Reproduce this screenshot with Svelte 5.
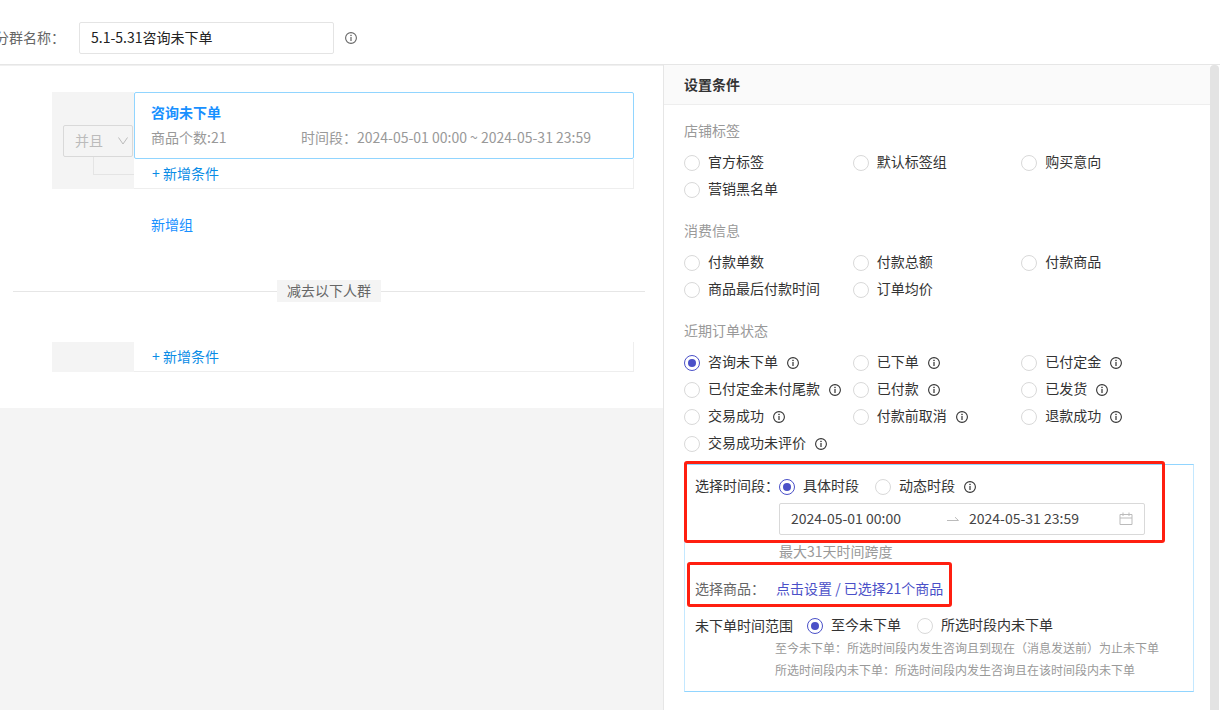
<script lang="ts">
    type Option = { label: string; info?: boolean };

    const sections: { title: string; options: Option[] }[] = [
        {
            title: '店铺标签',
            options: [{ label: '官方标签' }, { label: '默认标签组' }, { label: '购买意向' }, { label: '营销黑名单' }]
        },
        {
            title: '消费信息',
            options: [
                { label: '付款单数' },
                { label: '付款总额' },
                { label: '付款商品' },
                { label: '商品最后付款时间' },
                { label: '订单均价' }
            ]
        },
        {
            title: '近期订单状态',
            options: [
                { label: '咨询未下单', info: true },
                { label: '已下单', info: true },
                { label: '已付定金', info: true },
                { label: '已付定金未付尾款', info: true },
                { label: '已付款', info: true },
                { label: '已发货', info: true },
                { label: '交易成功', info: true },
                { label: '付款前取消', info: true },
                { label: '退款成功', info: true },
                { label: '交易成功未评价', info: true }
            ]
        }
    ];

    let name = $state('5.1-5.31咨询未下单');
    let condition = $state('咨询未下单');
    let period = $state('具体时段');
    let range = $state('至今未下单');
    let start = $state('2024-05-01 00:00');
    let end = $state('2024-05-31 23:59');
</script>

{#snippet infoIcon()}
    <svg class="info" viewBox="0 0 12 12" aria-hidden="true">
        <circle cx="6" cy="6" r="5.4" fill="none" stroke="currentColor" stroke-width="1.1" />
        <rect x="5.4" y="5" width="1.2" height="4" fill="currentColor" />
        <rect x="5.3" y="2.8" width="1.4" height="1.3" fill="currentColor" />
    </svg>
{/snippet}

<div class="page">
    <header class="top">
        <label for="name">分群名称：</label>
        <input id="name" class="name" type="text" bind:value={name} />
        {@render infoIcon()}
    </header>

    <div class="body">
        <main class="left">
            <div class="rules">
                <div class="group">
                    <div class="side">
                        <div class="logic">
                            <select disabled aria-label="条件关系">
                                <option>并且</option>
                            </select>
                            <svg viewBox="0 0 12 12" aria-hidden="true">
                                <path d="M1.5 2.5 6 9 10.5 2.5" fill="none" stroke="currentColor" />
                            </svg>
                        </div>
                        <div class="link-line"></div>
                    </div>
                    <div class="items">
                        <div class="card">
                            <strong>咨询未下单</strong>
                            <div class="desc">
                                <span class="count">商品个数:21</span>
                                <span>时间段：2024-05-01 00:00 ~ 2024-05-31 23:59</span>
                            </div>
                        </div>
                        <button class="add">+ 新增条件</button>
                    </div>
                </div>

                <button class="add-group">新增组</button>

                <div class="divider"><span>减去以下人群</span></div>

                <div class="group">
                    <div class="side"></div>
                    <div class="items">
                        <button class="add">+ 新增条件</button>
                    </div>
                </div>
            </div>
        </main>

        <aside class="right">
            <div class="panel">
                <h2>设置条件</h2>
                <div class="content">
                    {#each sections as section (section.title)}
                        <section>
                            <h3>{section.title}</h3>
                            <div class="options">
                                {#each section.options as option (option.label)}
                                    <label class="radio">
                                        <input type="radio" name="condition" value={option.label} bind:group={condition} />
                                        <span>{option.label}</span>
                                        {#if option.info}
                                            {@render infoIcon()}
                                        {/if}
                                    </label>
                                {/each}
                            </div>
                        </section>
                    {/each}

                    <div class="detail">
                        <div class="marked period">
                            <div class="row">
                                <span class="field-name">选择时间段：</span>
                                <label class="radio">
                                    <input type="radio" name="period" value="具体时段" bind:group={period} />
                                    <span>具体时段</span>
                                </label>
                                <label class="radio">
                                    <input type="radio" name="period" value="动态时段" bind:group={period} />
                                    <span>动态时段</span>
                                    {@render infoIcon()}
                                </label>
                            </div>
                            <div class="picker">
                                <input type="text" aria-label="开始时间" bind:value={start} />
                                <svg class="arrow" viewBox="0 0 14 14" aria-hidden="true">
                                    <path d="M1 8.5H12.5L9 5.2" fill="none" stroke="currentColor" />
                                </svg>
                                <input type="text" aria-label="结束时间" bind:value={end} />
                                <svg class="calendar" viewBox="0 0 14 14" aria-hidden="true">
                                    <path d="M1 2.5H13V12.5H1ZM1 6H13M4 .5V4M10 .5V4" fill="none" stroke="currentColor" />
                                </svg>
                            </div>
                        </div>
                        <p class="max">最大31天时间跨度</p>

                        <div class="marked goods">
                            <span class="goods-name">选择商品：</span>
                            <a href="#goods">点击设置 / 已选择21个商品</a>
                        </div>

                        <div class="row range">
                            <span class="range-name">未下单时间范围</span>
                            <label class="radio">
                                <input type="radio" name="range" value="至今未下单" bind:group={range} />
                                <span>至今未下单</span>
                            </label>
                            <label class="radio">
                                <input type="radio" name="range" value="所选时段内未下单" bind:group={range} />
                                <span>所选时段内未下单</span>
                            </label>
                        </div>
                        <p class="tip">至今未下单：所选时间段内发生咨询且到现在（消息发送前）为止未下单</p>
                        <p class="tip">所选时间段内未下单：所选时间段内发生咨询且在该时间段内未下单</p>
                    </div>
                </div>
            </div>
            <div class="scrollbar"></div>
        </aside>
    </div>
</div>

<style>
    :global(body) {
        margin: 0;
    }

    .page {
        display: flex;
        flex-direction: column;
        min-height: 100vh;
        background: #fff;
        color: #333;
        font: 14px/22px "Noto Sans CJK SC", sans-serif;
    }

    .page * {
        box-sizing: border-box;
    }

    h2, h3, p {
        margin: 0;
        font-size: 14px;
        font-weight: 400;
    }

    button, input, select {
        margin: 0;
        font: inherit;
        color: inherit;
    }

    button {
        padding: 0;
        border: 0;
        background: none;
        text-align: left;
        cursor: pointer;
    }

    .info {
        flex: none;
        width: 12px;
        height: 12px;
    }

    .top {
        display: flex;
        align-items: center;
        height: 65px;
        padding: 22px 0 10px;
        border-bottom: 1px solid #e6e6e6;
        color: #666;
    }

    .top label {
        flex: none;
        width: 84px;
        margin-left: -5px;
        padding-bottom: 2px;
    }

    .name {
        width: 255px;
        height: 32px;
        margin-right: 11px;
        padding: 0 11px 2px;
        border: 1px solid #e4e4e4;
        border-radius: 2px;
        color: #222;
    }

    .body {
        flex: 1;
        display: grid;
        grid-template-columns: minmax(0, 663fr) minmax(0, 557fr);
    }

    .left {
        background: #f4f4f4;
    }

    .rules {
        padding: 26px 0 36px;
        border-top: 1px solid #f0f0f0;
        background: #fff;
    }

    .group {
        display: flex;
        margin: 0 29px 0 52px;
    }

    .side {
        flex: none;
        width: 82px;
        background: #f4f4f4;
    }

    .logic {
        position: relative;
        width: 70px;
        height: 32px;
        margin: 33px 0 0 11px;
        color: #bbb;
    }

    .logic select {
        width: 100%;
        height: 100%;
        padding: 0 11px 2px;
        border: 1px solid #d9d9d9;
        border-radius: 2px;
        background: #f4f4f4;
        appearance: none;
        opacity: 1;
    }

    .logic svg {
        position: absolute;
        top: 10px;
        right: 4px;
        width: 12px;
        height: 12px;
    }

    .link-line {
        height: 18px;
        margin-left: 41px;
        border: solid #e4e4e4;
        border-width: 0 0 1px 1px;
    }

    .items {
        flex: 1;
        min-width: 0;
    }

    .card {
        padding: 8px 16px 10px;
        border: 1px solid #91d5ff;
        border-radius: 2px;
    }

    .card strong {
        display: block;
        margin-bottom: 3px;
        color: #1890ff;
    }

    .desc {
        display: flex;
        color: #999;
        white-space: nowrap;
    }

    .count {
        width: 150px;
    }

    .add {
        display: block;
        width: 100%;
        height: 30px;
        padding: 0 0 2px 18px;
        border: solid #eee;
        border-width: 0 1px 1px 0;
        color: #0a8ce6;
    }

    .add-group {
        display: block;
        margin: 24px 0 45px 151px;
        color: #1890ff;
    }

    .divider {
        display: flex;
        align-items: center;
        margin: 0 18px 40px 13px;
        color: #666;
    }

    .divider::before, .divider::after {
        content: '';
        flex: 1;
        height: 1px;
        background: #e6e6e6;
    }

    .divider span {
        padding: 0 10px 2px;
        background: #f4f4f4;
        line-height: 20px;
    }

    .right {
        display: flex;
        padding-right: 1px;
        border-left: 1px solid #e6e6e6;
    }

    .panel {
        flex: 1;
        min-width: 0;
    }

    .scrollbar {
        flex: none;
        width: 9px;
        border-radius: 4px 4px 0 0;
        background: #e3e3e3;
    }

    h2 {
        padding: 8px 20px 9px;
        border-bottom: 1px solid #eee;
        background: #fafafa;
        font-weight: 700;
    }

    .content {
        padding: 14px 16px 18px 20px;
    }

    section + section {
        margin-top: 16px;
    }

    h3 {
        margin-bottom: 8px;
        color: #999;
    }

    .options {
        display: grid;
        grid-template-columns: repeat(3, minmax(0, 1fr));
        grid-auto-rows: 27px;
        align-items: center;
        padding-right: 4px;
    }

    .radio {
        display: flex;
        align-items: center;
        white-space: nowrap;
    }

    .radio span {
        padding: 0 9px 4px 8px;
        line-height: 18px;
    }

    .radio input {
        flex: none;
        display: grid;
        place-items: center;
        width: 16px;
        height: 16px;
        border: 1px solid #d9d9d9;
        border-radius: 50%;
        background: #fff;
        appearance: none;
    }

    .radio input:checked {
        border-color: #4a50c8;
    }

    .radio input:checked::before {
        content: '';
        width: 8px;
        height: 8px;
        border-radius: 50%;
        background: #4a50c8;
    }

    .detail {
        margin-top: 7px;
        padding: 11px 10px 10px;
        border: 1px solid #91d5ff;
        border-right-color: #c4e8ff;
        border-left-color: #c4e8ff;
    }

    .row {
        display: flex;
        align-items: center;
    }

    .row .radio + .radio {
        margin-left: 7px;
    }

    .marked {
        position: relative;
    }

    .marked::after {
        content: '';
        position: absolute;
        border: 3px solid #ff1f10;
        border-radius: 3px;
        pointer-events: none;
    }

    .period::after {
        inset: -15px 18px -8px -11px;
    }

    .field-name {
        width: 84px;
        padding-bottom: 4px;
        line-height: 18px;
    }

    .picker {
        display: flex;
        align-items: center;
        height: 32px;
        margin: 5px 38px 0 84px;
        padding: 0 11px;
        border: 1px solid #d9d9d9;
        border-radius: 2px;
        color: #bbb;
    }

    .picker input {
        flex: 1;
        min-width: 0;
        padding: 0 0 2px;
        border: 0;
        background: none;
        color: #444;
    }

    .picker svg {
        flex: none;
        width: 14px;
        height: 14px;
    }

    .picker .arrow {
        margin: 0 9px 0 5px;
    }

    .max {
        margin: 5px 0 15px 84px;
        color: #999;
    }

    .goods {
        display: flex;
        width: max-content;
        margin-bottom: 16px;
    }

    .goods::after {
        inset: -15px -9px -8px -8px;
    }

    .goods-name {
        width: 81px;
        color: #666;
    }

    a {
        color: #4a50c8;
        text-decoration: none;
    }

    .range-name {
        margin-right: 14px;
        padding-bottom: 2px;
        line-height: 20px;
    }

    .tip {
        margin-left: 80px;
        color: #999;
        font-size: 12px;
    }
</style>
